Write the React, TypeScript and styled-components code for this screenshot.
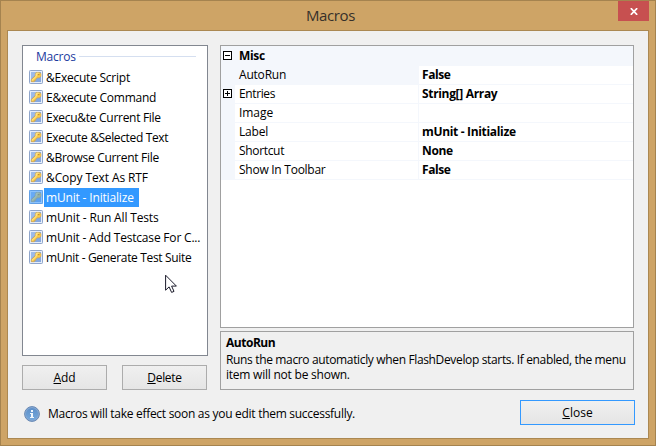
import React from "react";
import styled, { createGlobalStyle, css } from "styled-components";

const GlobalStyle = createGlobalStyle`
  * { box-sizing: border-box; }
  body { margin: 0; overflow: hidden; }
  button { font: inherit; padding: 0; margin: 0; }
`;

const Window = styled.div`
  width: 656px;
  height: 446px;
  padding: 0 6px 6px;
  display: flex;
  flex-direction: column;
  background: #cea466;
  border: 1px solid #a5834f;
  color: #000;
  font: 12px/15px "Open Sans", "Noto Sans", sans-serif;
  white-space: nowrap;
  cursor: default;
`;

const TitleBar = styled.header`
  height: 29px;
  flex: none;
  display: grid;
  grid-template-columns: 31px 1fr 31px;
`;

const Title = styled.h1`
  grid-column: 2;
  margin: 0;
  padding: 2px 0 0 5px;
  text-align: center;
  font-size: 15px;
  line-height: 24px;
  font-weight: 400;
  letter-spacing: -0.4px;
  color: #36302a;
`;

const CloseBox = styled.button`
  height: 20px;
  border: 0;
  background: #c75050;
  display: flex;
  align-items: center;
  justify-content: center;
  svg { display: block; margin-top: 1px; }
`;

const Content = styled.main`
  flex: 1;
  min-height: 0;
  border: 1px solid #ab8852;
  background: #f0f0f0;
  padding: 14px 13px 0 14px;
`;

const Columns = styled.div`
  display: flex;
  gap: 12px;
  height: 345px;
`;

const LeftColumn = styled.section`
  width: 186px;
  flex: none;
`;

const RightColumn = styled.section`
  width: 414px;
  flex: none;
  display: flex;
  flex-direction: column;
  gap: 3px;
`;

const Text = styled.span<{ $track?: number }>`
  letter-spacing: ${(p) => p.$track ?? 0}px;
`;

const ListBox = styled.div`
  height: 311px;
  border: 1px solid #828790;
  background: #fff;
`;

const GroupHeader = styled.div`
  height: 22px;
  padding: 3px 11px 0 13px;
  display: flex;
  gap: 3px;
  color: #1a3a9e;
  &::after {
    content: "";
    flex: 1;
    height: 1px;
    margin-top: 7px;
    background: #d5dff0;
  }
`;

const MacroRow = styled.div`
  height: 20px;
  padding-left: 6px;
  display: flex;
  align-items: flex-start;
  svg { display: block; margin-top: 2px; flex: none; }
`;

const MacroLabel = styled.div<{ $selected?: boolean }>`
  height: 19px;
  margin-left: 1px;
  padding: 1px 0 0 2px;
  line-height: 17px;
  ${(p) =>
    p.$selected &&
    css`
      background: #3399ff;
      color: #fff;
      width: 95px;
    `}
`;

const ButtonRow = styled.div`
  display: flex;
  gap: 15px;
  margin-top: 9px;
`;

const Button = styled.button<{ $primary?: boolean }>`
  width: ${(p) => (p.$primary ? 115 : 85)}px;
  height: 25px;
  border: 1px solid ${(p) => (p.$primary ? "#3399ff" : "#acacac")};
  background: linear-gradient(#f0f0f0, #e5e5e5);
  color: #000;
  line-height: 21px;
  padding-bottom: 1px;
`;

const AccessKey = styled.span`
  text-decoration: underline;
  text-decoration-thickness: 1px;
  text-underline-offset: 1px;
`;

const PropertyGrid = styled.div`
  height: 283px;
  border: 1px solid #a0a0a0;
  background: #fff;
`;

const CategoryRow = styled.div`
  height: 20px;
  display: grid;
  grid-template-columns: 14px 1fr;
  background: #f4f7fc;
  font-weight: 700;
`;

const PropertyRow = styled.div`
  height: 19px;
  display: grid;
  grid-template-columns: 14px 184px 1fr;
  background: #f4f7fc;
`;

const Gutter = styled.div<{ $top: number }>`
  padding: ${(p) => p.$top}px 0 0 2px;
  svg { display: block; }
`;

const NameCell = styled.div<{ $selected?: boolean }>`
  height: ${(p) => (p.$selected ? 19 : 18)}px;
  width: 183px;
  padding-left: 4px;
  line-height: 18px;
  background: ${(p) => (p.$selected ? "#f4f7fc" : "#fff")};
`;

const ValueCell = styled.div`
  height: 18px;
  padding-left: 3px;
  line-height: 18px;
  font-weight: 700;
  background: #fff;
`;

const CategoryName = styled.div`
  padding-left: 4px;
  line-height: 20px;
`;

const HelpPane = styled.div`
  height: 59px;
  border: 1px solid #a0a0a0;
  padding: 2px 4px 0 5px;
`;

const HelpTitle = styled.div`
  height: 18px;
  line-height: 17px;
  font-weight: 700;
`;

const HelpText = styled.p`
  margin: 0;
  line-height: 15px;
`;

const Footer = styled.footer`
  display: flex;
  justify-content: space-between;
  padding: 10px 0 0 2px;
`;

const Notice = styled.div`
  display: flex;
  padding-top: 6px;
  line-height: 15px;
  gap: 8px;
  svg { display: block; }
`;

const CursorIcon = styled.svg`
  position: absolute;
  left: 165px;
  top: 274px;
`;

function KeyIcon({ selected }: { selected?: boolean }) {
  return (
    <svg width="14" height="14" viewBox="0 0 14 14">
      <rect x=".5" y=".5" width="13" height="13" rx=".8" fill="#e6eefa" stroke="#8fa5ca" />
      <rect x="2" y="2" width="10" height="10" fill="#86a8de" />
      <path d="M2 2h7L2 9z" fill="#9dbbea" />
      <path
        d="M7.4 2.4h3.2l1.4 1.4v2.4L10.6 7.8H8.3L6.6 9.6v.9H5.4v1.2H2.2V9.6L6.3 5.8V3.6z"
        fill="#f9cb4b"
        stroke="#d39a3e"
        strokeWidth=".5"
      />
      <path d="M3 10.4 7.2 6.3V4l.9-.8h1.5" fill="none" stroke="#ffeb9c" strokeWidth="1" />
      <rect x="9.2" y="4" width="1.2" height="1.2" fill="#b98238" />
      {selected && <rect width="14" height="14" fill="#3399ff" fillOpacity=".5" />}
    </svg>
  );
}

function Expander({ open }: { open?: boolean }) {
  return (
    <svg width="9" height="9" viewBox="0 0 9 9" shapeRendering="crispEdges">
      <rect x=".5" y=".5" width="8" height="8" fill="#fff" stroke="#000" />
      <path d={open ? "M2 4.5h5" : "M2 4.5h5M4.5 2v5"} stroke="#000" />
    </svg>
  );
}

function InfoIcon() {
  return (
    <svg width="16" height="16" viewBox="0 0 16 16">
      <defs>
        <linearGradient id="info" x2="0" y2="1">
          <stop stopColor="#5d8fc8" />
          <stop offset="1" stopColor="#75a8dc" />
        </linearGradient>
      </defs>
      <circle cx="8" cy="8" r="7.4" fill="#86a9d4" stroke="#6788b3" strokeWidth="1" />
      <circle cx="8" cy="8" r="6.1" fill="url(#info)" />
      <path d="M7 4h2v2H7zM6 7h3v4h1v1H6v-1h1V8H6z" fill="#eef5fc" />
    </svg>
  );
}

const macros: { name: string; track: number; selected?: boolean }[] = [
  { name: "&Execute Script", track: -0.24 },
  { name: "E&xecute Command", track: -0.24 },
  { name: "Execu&te Current File", track: -0.29 },
  { name: "Execute &Selected Text", track: -0.35 },
  { name: "&Browse Current File", track: -0.29 },
  { name: "&Copy Text As RTF", track: -0.1 },
  { name: "mUnit - Initialize", track: -0.17, selected: true },
  { name: "mUnit - Run All Tests", track: -0.15 },
  { name: "mUnit - Add Testcase For C...", track: -0.19 },
  { name: "mUnit - Generate Test Suite", track: -0.33 },
];

const properties = [
  { name: "AutoRun", track: -0.2, value: "False", valueTrack: -0.45, selected: true },
  { name: "Entries", track: -0.38, value: "String[] Array", valueTrack: -0.33, expandable: true },
  { name: "Image", track: -0.05, value: "", valueTrack: 0 },
  { name: "Label", track: -0.2, value: "mUnit - Initialize", valueTrack: -0.33 },
  { name: "Shortcut", track: -0.33, value: "None", valueTrack: -0.35 },
  { name: "Show In Toolbar", track: -0.26, value: "False", valueTrack: -0.45 },
];

export default function App() {
  return (
    <>
      <GlobalStyle />
      <Window>
        <TitleBar>
          <Title>Macros</Title>
          <CloseBox aria-label="Close window">
            <svg width="8" height="7" viewBox="0 0 8 7">
              <path d="M.8.2 7.2 6.8M7.2.2.8 6.8" stroke="#fff" strokeWidth="1.7" />
            </svg>
          </CloseBox>
        </TitleBar>
        <Content>
          <Columns>
            <LeftColumn>
              <ListBox>
                <GroupHeader>
                  <Text $track={-0.2}>Macros</Text>
                </GroupHeader>
                {macros.map((m) => (
                  <MacroRow key={m.name}>
                    <KeyIcon selected={m.selected} />
                    <MacroLabel $selected={m.selected}>
                      <Text $track={m.track}>{m.name}</Text>
                    </MacroLabel>
                  </MacroRow>
                ))}
              </ListBox>
              <ButtonRow>
                <Button>
                  <Text $track={-0.1}><AccessKey>A</AccessKey>dd</Text>
                </Button>
                <Button>
                  <Text $track={-0.3}><AccessKey>D</AccessKey>elete</Text>
                </Button>
              </ButtonRow>
            </LeftColumn>
            <RightColumn>
              <PropertyGrid>
                <CategoryRow>
                  <Gutter $top={5}><Expander open /></Gutter>
                  <CategoryName><Text $track={-0.35}>Misc</Text></CategoryName>
                </CategoryRow>
                {properties.map((p) => (
                  <PropertyRow key={p.name}>
                    <Gutter $top={4}>{p.expandable && <Expander />}</Gutter>
                    <NameCell $selected={p.selected}>
                      <Text $track={p.track}>{p.name}</Text>
                    </NameCell>
                    <ValueCell>
                      <Text $track={p.valueTrack}>{p.value}</Text>
                    </ValueCell>
                  </PropertyRow>
                ))}
              </PropertyGrid>
              <HelpPane>
                <HelpTitle><Text $track={-0.48}>AutoRun</Text></HelpTitle>
                <HelpText>
                  <Text $track={-0.35}>
                    Runs the macro automaticly when FlashDevelop starts. If enabled, the menu
                  </Text>
                  <br />
                  <Text $track={-0.23}>item will not be shown.</Text>
                </HelpText>
              </HelpPane>
            </RightColumn>
          </Columns>
          <Footer>
            <Notice>
              <InfoIcon />
              <Text $track={-0.285}>Macros will take effect soon as you edit them successfully.</Text>
            </Notice>
            <Button $primary>
              <AccessKey>C</AccessKey>lose
            </Button>
          </Footer>
        </Content>
      </Window>
      <CursorIcon width="13" height="20" viewBox="0 0 13 20">
        <path
          d="M.6 1.2v15l3.5-3.3 2.5 5.5 2.4-1-2.4-5.3h4.8z"
          fill="#fff"
          stroke="#1a1a2a"
          strokeWidth="1"
        />
      </CursorIcon>
    </>
  );
}
